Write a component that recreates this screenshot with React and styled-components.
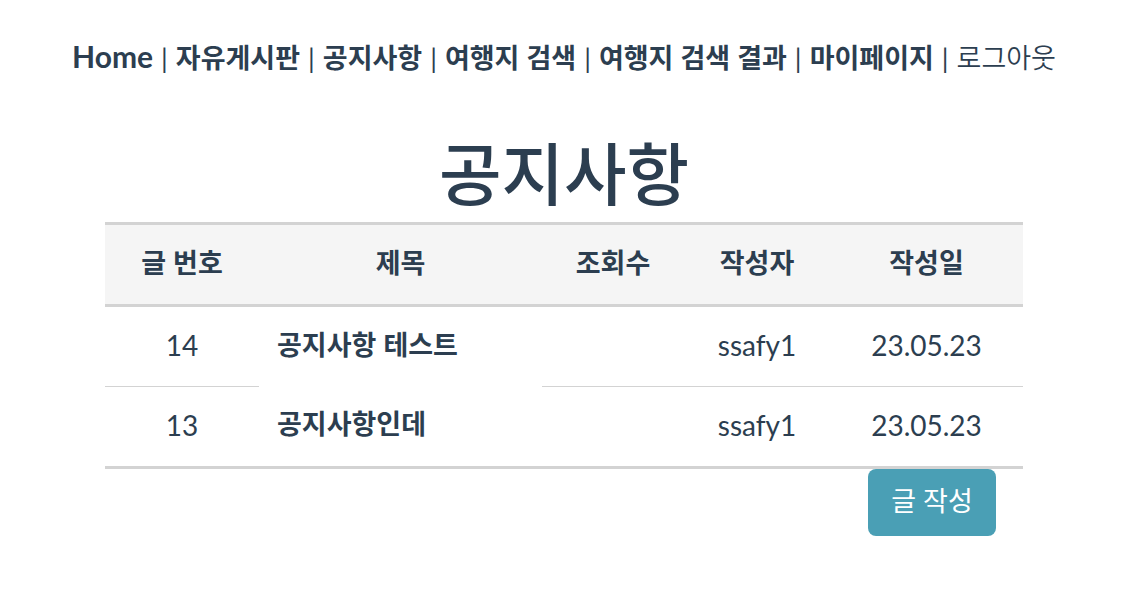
import React, { Fragment } from "react";
import styled, { createGlobalStyle } from "styled-components";

const korean = `"Noto Sans", "Noto Sans CJK KR", sans-serif`;
const latin = `Lato, "Noto Sans CJK KR", sans-serif`;

const GlobalStyle = createGlobalStyle`
  *, *::before, *::after { box-sizing: border-box; }
  body {
    margin: 0;
    background: #fff;
    color: #2c3e50;
    font-family: ${korean};
    font-size: 27px;
    line-height: 40px;
  }
`;

const Page = styled.div`
  padding-right: 12px;
  text-align: center;
`;

const Nav = styled.nav`
  display: flex;
  justify-content: center;
  align-items: baseline;
  gap: 8px;
  padding: 36px 0 60px;
  white-space: nowrap;
`;

const NavLink = styled.a`
  color: inherit;
  text-decoration: none;
  font-family: ${(p) => (p.$latin ? latin : korean)};
  font-size: ${(p) => (p.$latin ? "30px" : "27px")};
  font-weight: ${(p) => (p.$plain ? 350 : 700)};
`;

const Separator = styled.span`
  font-family: ${latin};
  font-weight: 400;
`;

const Board = styled.main`
  padding: 0 105px;
`;

const Title = styled.h1`
  margin: 0;
  padding-bottom: 12px;
  font-family: ${latin};
  font-size: 68px;
  line-height: 72px;
  font-weight: 500;
`;

const Table = styled.table`
  width: 100%;
  table-layout: fixed;
  border-collapse: collapse;
  border-top: 3px solid #d3d3d3;
  border-bottom: 3px solid #d3d3d3;
`;

const HeadCell = styled.th`
  width: ${(p) => p.$width}px;
  height: 82px;
  padding: 0 0 4px;
  background: #f5f5f5;
  border-bottom: 3px solid #d3d3d3;
  font-weight: 700;
`;

const Cell = styled.td`
  height: 81px;
  padding: 0 0 4px;
  border-bottom: 1px solid #d3d3d3;
  font-family: ${latin};
  font-size: 28px;
  font-weight: 400;
`;

const TitleCell = styled.td`
  padding: 0 0 4px 18px;
  text-align: left;
`;

const PostLink = styled.a`
  color: inherit;
  text-decoration: none;
  font-weight: 700;
`;

const Actions = styled.div`
  display: flex;
  justify-content: flex-end;
  padding-right: 27px;
`;

const WriteButton = styled.button`
  width: 128px;
  height: 67px;
  padding: 0 0 4px;
  border: 0;
  border-radius: 8px;
  background: #4a9fb5;
  color: #fff;
  font: inherit;
  cursor: pointer;
`;

const links = ["Home", "자유게시판", "공지사항", "여행지 검색", "여행지 검색 결과", "마이페이지"];

/* Widths are relative: the table shares its full width out in these proportions. */
const columns = [
  { label: "글 번호", width: 154 },
  { label: "제목", width: 283 },
  { label: "조회수", width: 142 },
  { label: "작성자", width: 146 },
  { label: "작성일", width: 193 },
];

const posts = [
  { id: 14, title: "공지사항 테스트", author: "ssafy1", date: "23.05.23" },
  { id: 13, title: "공지사항인데", author: "ssafy1", date: "23.05.23" },
];

export default function App() {
  return (
    <Page>
      <GlobalStyle />
      <Nav>
        {links.map((label) => (
          <Fragment key={label}>
            <NavLink href="#" $latin={label === "Home"}>{label}</NavLink>
            <Separator>|</Separator>
          </Fragment>
        ))}
        <NavLink href="#" $plain>로그아웃</NavLink>
      </Nav>
      <Board>
        <Title>공지사항</Title>
        <Table>
          <thead>
            <tr>
              {columns.map((c) => (
                <HeadCell key={c.label} $width={c.width} scope="col">{c.label}</HeadCell>
              ))}
            </tr>
          </thead>
          <tbody>
            {posts.map((post) => (
              <tr key={post.id}>
                <Cell>{post.id}</Cell>
                <TitleCell><PostLink href="#">{post.title}</PostLink></TitleCell>
                <Cell />
                <Cell>{post.author}</Cell>
                <Cell>{post.date}</Cell>
              </tr>
            ))}
          </tbody>
        </Table>
        <Actions>
          <WriteButton type="button">글 작성</WriteButton>
        </Actions>
      </Board>
    </Page>
  );
}
